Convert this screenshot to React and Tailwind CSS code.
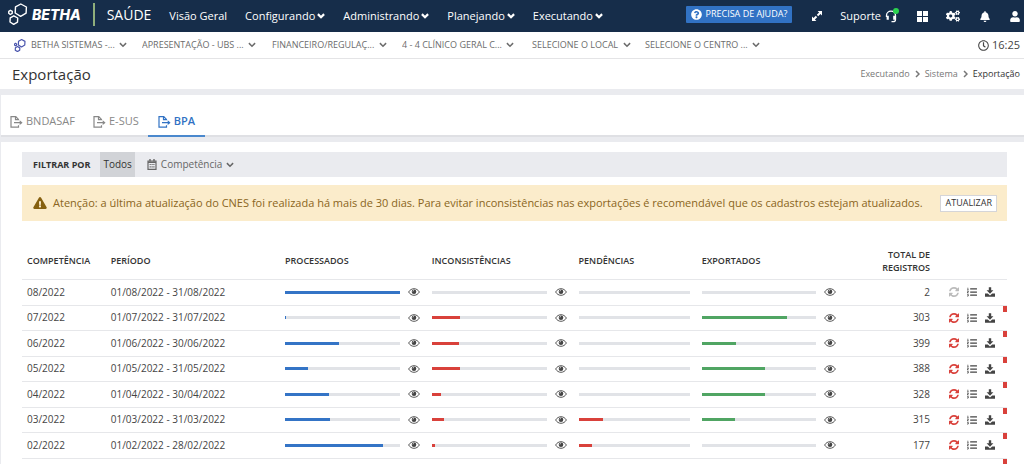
import { FaQuestionCircle, FaCogs, FaBell, FaUser, FaRegClock, FaExclamationTriangle, FaListOl } from "react-icons/fa";

const menus = ["Configurando", "Administrando", "Planejando", "Executando"];

const contexts = [
  { label: "Entidade", value: "BETHA SISTEMAS -...", width: "w-[111px]" },
  { label: "Unidade", value: "APRESENTAÇÃO - UBS ...", width: "w-[130px]" },
  { label: "Setor", value: "FINANCEIRO/REGULAÇ...", width: "w-[130px]" },
  { label: "Especialidade", value: "4 - 4 CLÍNICO GERAL C...", width: "w-[130px]" },
  { label: "Local", value: "SELECIONE O LOCAL", width: "w-[113px]" },
  { label: "Centro de custo", value: "SELECIONE O CENTRO ...", width: "w-[130px]" },
];

// Bar values are percentages of the total
const rows = [
  { month: "08/2022", period: "01/08/2022 - 31/08/2022", processed: 100, issues: 0, pending: 0, exported: 0, total: 2, locked: true },
  { month: "07/2022", period: "01/07/2022 - 31/07/2022", processed: 1, issues: 25, pending: 0, exported: 74, total: 303 },
  { month: "06/2022", period: "01/06/2022 - 30/06/2022", processed: 47, issues: 24, pending: 0, exported: 30, total: 399 },
  { month: "05/2022", period: "01/05/2022 - 31/05/2022", processed: 20, issues: 25, pending: 0, exported: 55, total: 388 },
  { month: "04/2022", period: "01/04/2022 - 30/04/2022", processed: 38, issues: 8, pending: 0, exported: 55, total: 328 },
  { month: "03/2022", period: "01/03/2022 - 31/03/2022", processed: 39, issues: 11, pending: 22, exported: 29, total: 315 },
  { month: "02/2022", period: "01/02/2022 - 28/02/2022", processed: 85, issues: 3, pending: 12, exported: 0, total: 177 },
];

function Hexagons({ className, stroke = 1.4 }) {
  return (
    <svg viewBox="0 0 20 22" className={className} fill="none" stroke="currentColor" strokeWidth={stroke} strokeLinejoin="round" aria-hidden="true">
      <path d="M12.800 1l5.600 3-.3 6.200-5.500 3.200-5.400-3.400.3-6.100z" />
      <path d="M5.800 12.800l3.900 2.200-.2 4.100-3.800 2.200-3.700-2.300.2-4.100z" />
      <path d="M2.400 7.300l1.900 1.100-.1 2-1.900 1.100-1.600-1.200.1-2z" />
    </svg>
  );
}

function Chevron({ bold = false }) {
  return (
    <svg viewBox="0 0 8 6" className="h-[6px] w-2 shrink-0" fill="none" stroke="currentColor" strokeWidth={bold ? 2.2 : 1.5} aria-hidden="true">
      <path d="M.9 1.1 4 4.2 7.1 1.1" />
    </svg>
  );
}

function CrumbArrow() {
  return (
    <svg viewBox="0 0 5 8" className="h-2 w-[5px]" fill="none" stroke="currentColor" strokeWidth="1.5" aria-hidden="true">
      <path d="M1 1l3 3-3 3" />
    </svg>
  );
}

function ExportIcon() {
  return (
    <svg viewBox="0 0 13 12" className="h-3 w-[13px]" fill="none" stroke="currentColor" strokeWidth="1.2" aria-hidden="true">
      <path d="M8.5 4.2V3.4L5.8.7H1v10.4h7.5V9.2M5.5.8v2.9h3M4 6.7h6.5" />
      <path d="M9.7 4.3v4.8l2.9-2.4z" fill="currentColor" stroke="none" />
    </svg>
  );
}

function CalendarIcon() {
  return (
    <svg viewBox="0 0 10 11" className="h-[11px] w-[10px]" fill="none" stroke="currentColor" aria-hidden="true">
      <path d="M1 2h8v8.3H1zM1 3.3h8" strokeWidth="1.2" />
      <path d="M3 0v2.5M7 0v2.5" strokeWidth="1.4" />
      <path d="M2.6 5.5h1.2M4.5 5.5h1.2M6.3 5.5h1.2M2.6 7.8h1.2M4.5 7.8h1.2M6.3 7.8h1.2" strokeWidth="1.2" />
    </svg>
  );
}

function ExpandIcon() {
  return (
    <svg viewBox="0 0 10 10" className="h-[10px] w-[10px]" fill="currentColor" aria-hidden="true">
      <path d="M5.6 0H10v4.4L8.5 2.9 6.2 5.2 4.8 3.8 7.1 1.5zM4.4 10H0V5.6l1.5 1.5 2.3-2.3 1.4 1.4-2.3 2.3z" />
    </svg>
  );
}

function HeadsetIcon() {
  return (
    <svg viewBox="0 0 12 13" className="h-[13px] w-3" fill="none" stroke="currentColor" aria-hidden="true">
      <path d="M1.5 7V5.5C1.5 3 3.5 1.2 6 1.2s4.5 1.8 4.5 4.3v4c0 1.5-1 2.2-2.5 2.2H6.5" strokeWidth="1.3" />
      <path d="M2.7 5.8v4M9.3 5.8v4" strokeWidth="2.2" />
    </svg>
  );
}

function EyeIcon() {
  return (
    <svg viewBox="0 0 12 8" className="h-2 w-3" aria-hidden="true">
      <path d="M.6 4C1.9 1.900 3.8.7 6 .7S10.100 1.900 11.400 4C10.100 6.100 8.200 7.300 6 7.300S1.900 6.100.6 4z" fill="none" stroke="currentColor" strokeWidth=".9" />
      <circle cx="6" cy="3.7" r="2.3" fill="currentColor" />
      <path d="M4.8 3.5C4.8 2.8 5.3 2.4 6 2.4" fill="none" stroke="#fff" strokeWidth=".6" />
    </svg>
  );
}

function RefreshIcon() {
  return (
    <svg viewBox="0 0 1536 1536" className="h-[10px] w-[10px]" fill="currentColor" aria-hidden="true">
      <path d="M1511 928q0 5-1 7-64 268-268 434.500T764 1536q-146 0-282.500-55T238 1324l-129 129q-19 19-45 19t-45-19-19-45V960q0-26 19-45t45-19h448q26 0 45 19t19 45-19 45l-137 137q71 66 161 102t187 36q134 0 250-65t186-179q11-17 53-117 8-23 30-23h192q13 0 22.500 9.500t9.500 22.500zm25-800v448q0 26-19 45t-45 19h-448q-26 0-45-19t-19-45 19-45l138-138Q969 256 768 256q-134 0-250 65T332 500q-11 17-53 117-8 23-30 23H50q-13 0-22.500-9.500T18 608v-7q65-268 270-434.500T768 0q146 0 284 55.500T1297 212l130-129q19-19 45-19t45 19 19 45z" />
    </svg>
  );
}

function DownloadIcon() {
  return (
    <svg viewBox="0 0 10 10" className="h-[10px] w-[10px]" fill="currentColor" aria-hidden="true">
      <path d="M3.8.2h2.4v3.1h2.200L5 6.800 1.600 3.300h2.200z" />
      <path d="M0 6.6h2.800L5 8.400l2.200-1.800H10v3.200H0z" />
    </svg>
  );
}

function Progress({ value, color, label, view = true }) {
  return (
    <td className="pl-1">
      <div className="flex items-center gap-2 pr-2">
        <div className="h-[3px] flex-1 bg-[#e1e3e7]" role="progressbar" aria-label={label} aria-valuenow={value}>
          <div className={`h-full ${color}`} style={{ width: `${value}%` }} />
        </div>
        {view && (
          <button aria-label={`Visualizar ${label}`}>
            <EyeIcon />
          </button>
        )}
      </div>
    </td>
  );
}

function Marker() {
  return <span className="absolute top-0 right-0 h-[6px] w-1 bg-[#d9413b]" />;
}

function TopBar() {
  return (
    <header className="flex h-8 items-center bg-[#162d4a] pr-1 pl-2 text-[11px] text-white">
      <div className="flex h-full items-center pb-1">
        <Hexagons className="h-[22px] w-5" />
        <span className="ml-1 font-['Inter',sans-serif] text-[14px] font-extrabold italic">BETHA</span>
        <span className="ml-3 h-[23px] w-[2px] bg-[#8fae7c]" />
        <span className="ml-3 text-[14px]">SAÚDE</span>
      </div>
      <nav className="ml-[18px] flex items-center gap-[18px]">
        <a href="#visao-geral">Visão Geral</a>
        {menus.map((menu) => (
          <button key={menu} className="flex items-center gap-[2px]">
            {menu}
            <Chevron bold />
          </button>
        ))}
      </nav>
      <div className="ml-auto flex h-full items-center">
        <div className="flex h-full items-center pb-1">
          <button className="flex h-[17px] items-center gap-1 rounded-[1px] bg-[#3172c4] px-[5px] text-[9px]">
            <FaQuestionCircle className="h-[11px] w-[11px]" />
            PRECISA DE AJUDA?
          </button>
        </div>
        <button className="ml-5 flex" aria-label="Expandir">
          <ExpandIcon />
        </button>
        <button className="relative ml-[18px] flex items-center gap-1">
          Suporte
          <HeadsetIcon />
          <span className="absolute top-0 -right-[2px] h-[6px] w-[6px] rounded-full bg-[#2bd24f]" />
        </button>
        <button className="ml-5 grid grid-cols-2 gap-px" aria-label="Aplicativos">
          <span className="h-[5px] w-[5px] bg-white" />
          <span className="h-[5px] w-[5px] bg-white" />
          <span className="h-[5px] w-[5px] bg-white" />
          <span className="h-[5px] w-[5px] bg-white" />
        </button>
        <button className="ml-[18px] flex" aria-label="Configurações">
          <FaCogs className="h-3 w-[14px]" />
        </button>
        <button className="ml-5 flex" aria-label="Notificações">
          <FaBell className="h-[11px] w-[10px]" />
        </button>
        <button className="ml-5 flex" aria-label="Usuário">
          <FaUser className="h-[11px] w-[10px]" />
        </button>
      </div>
    </header>
  );
}

function ContextBar() {
  return (
    <div className="flex h-[27px] items-center border-b border-[#e4e4e6] pr-1 pl-[14px] text-[9px] text-[#6c6c6c]">
      <Hexagons className="mr-[5px] h-[13px] w-3 text-[#4a55ad]" stroke={2} />
      {contexts.map((item) => (
        <label key={item.label} className={`flex items-center gap-1 ${item.width}`}>
          <select aria-label={item.label} className="appearance-none bg-transparent">
            <option>{item.value}</option>
          </select>
          <Chevron />
        </label>
      ))}
      <span className="ml-auto flex items-center gap-[3px] text-[11px] text-[#444]">
        <FaRegClock className="h-[11px] w-[11px]" />
        16:25
      </span>
    </div>
  );
}

export default function App() {
  return (
    <div className="h-screen overflow-hidden bg-white font-['Open_Sans',sans-serif] text-[#333]">
      <TopBar />
      <ContextBar />
      <div className="flex h-[30px] items-center justify-between pr-1 pl-3">
        <h1 className="text-[15px]">Exportação</h1>
        <nav className="flex items-center gap-[5px] text-[9px] text-[#777]" aria-label="Trilha">
          <a href="#executando">Executando</a>
          <CrumbArrow />
          <a href="#sistema">Sistema</a>
          <CrumbArrow />
          <span className="text-[#333]">Exportação</span>
        </nav>
      </div>

      <main className="bg-[#eaebef] pt-[6px] pl-px">
        <nav className="flex h-[42px] items-end bg-white text-[11px] text-[#888] shadow-[inset_0_-2px_0_#dfe0e4]">
          <a href="#bndasaf" className="flex h-[31px] items-center gap-[3px] px-[9px]">
            <ExportIcon />
            BNDASAF
          </a>
          <a href="#esus" className="flex h-[31px] items-center gap-[3px] px-[9px]">
            <ExportIcon />
            E-SUS
          </a>
          <a href="#bpa" className="flex h-[31px] items-center gap-[3px] border-b-2 border-[#4a88cd] px-[10px] pt-[2px] font-semibold text-[#3172c4]">
            <ExportIcon />
            BPA
          </a>
        </nav>

        <section className="mt-[5px] bg-white pt-[10px] pr-[17px] pl-[21px]">
          <div className="flex h-[25px] items-center bg-[#eaebef] pl-[11px] text-[10px]">
            <span className="text-[9px] font-bold">FILTRAR POR</span>
            <button className="ml-[10px] h-full bg-[#d1d3d7] px-[3px]">Todos</button>
            <button className="ml-3 flex items-center gap-1 text-[#666]">
              <CalendarIcon />
              Competência
              <Chevron />
            </button>
          </div>

          <div className="mt-2 flex h-9 items-center bg-[#fbeccb] pr-[10px] pl-[11px] text-[11px] text-[#8a6521]">
            <FaExclamationTriangle className="mr-[6px] h-3 w-[14px] text-[#86600f]" />
            <p>
              Atenção: a última atualização do CNES foi realizada há mais de 30 dias. Para evitar inconsistências nas exportações é recomendável que os cadastros estejam atualizados.
            </p>
            <button className="ml-auto h-[17px] border border-[#d5d5d8] bg-white px-1 text-[9px] text-[#333]">ATUALIZAR</button>
          </div>

          <table className="mt-[22px] w-full table-fixed border-collapse text-[10px] text-[#444]">
            <thead>
              <tr className="h-9 text-left text-[9px] leading-[13px] text-[#333]">
                <th className="w-[8.5%] pl-[5px] font-semibold">COMPETÊNCIA</th>
                <th className="w-[17.8%] pl-[5px] font-semibold">PERÍODO</th>
                <th className="w-[14.9%] pl-1 font-semibold">PROCESSADOS</th>
                <th className="w-[14.9%] pl-1 font-semibold">INCONSISTÊNCIAS</th>
                <th className="w-[12.5%] pl-1 font-semibold">PENDÊNCIAS</th>
                <th className="w-[14.9%] pl-1 font-semibold">EXPORTADOS</th>
                <th className="w-[9%] pr-[3px] pl-4 text-right font-semibold">TOTAL DE REGISTROS</th>
                <th aria-label="Ações" />
              </tr>
            </thead>
            <tbody>
              {rows.map((row) => (
                <tr key={row.month} className="h-[25px] border-t border-[#e6e7ea] odd:h-[26px]">
                  <td className="pl-[5px]">{row.month}</td>
                  <td className="pl-[5px]">{row.period}</td>
                  <Progress value={row.processed} color="bg-[#3474c6]" label="Processados" />
                  <Progress value={row.issues} color="bg-[#d9413b]" label="Inconsistências" />
                  <Progress value={row.pending} color="bg-[#d9413b]" label="Pendências" view={false} />
                  <Progress value={row.exported} color="bg-[#50a563]" label="Exportados" />
                  <td className="pr-[3px] text-right">{row.total}</td>
                  <td className="relative">
                    {!row.locked && <Marker />}
                    <div className="flex items-center justify-end gap-2 pr-3">
                      <button aria-label="Reprocessar" disabled={row.locked} className="text-[#d9413b] disabled:text-[#bbb]">
                        <RefreshIcon />
                      </button>
                      <button aria-label="Detalhar">
                        <FaListOl className="h-[10px] w-[10px]" />
                      </button>
                      <button aria-label="Baixar">
                        <DownloadIcon />
                      </button>
                    </div>
                  </td>
                </tr>
              ))}
              <tr className="h-[25px] border-t border-[#e6e7ea]">
                <td colSpan={8} className="relative">
                  <Marker />
                </td>
              </tr>
            </tbody>
          </table>
        </section>
      </main>
    </div>
  );
}
